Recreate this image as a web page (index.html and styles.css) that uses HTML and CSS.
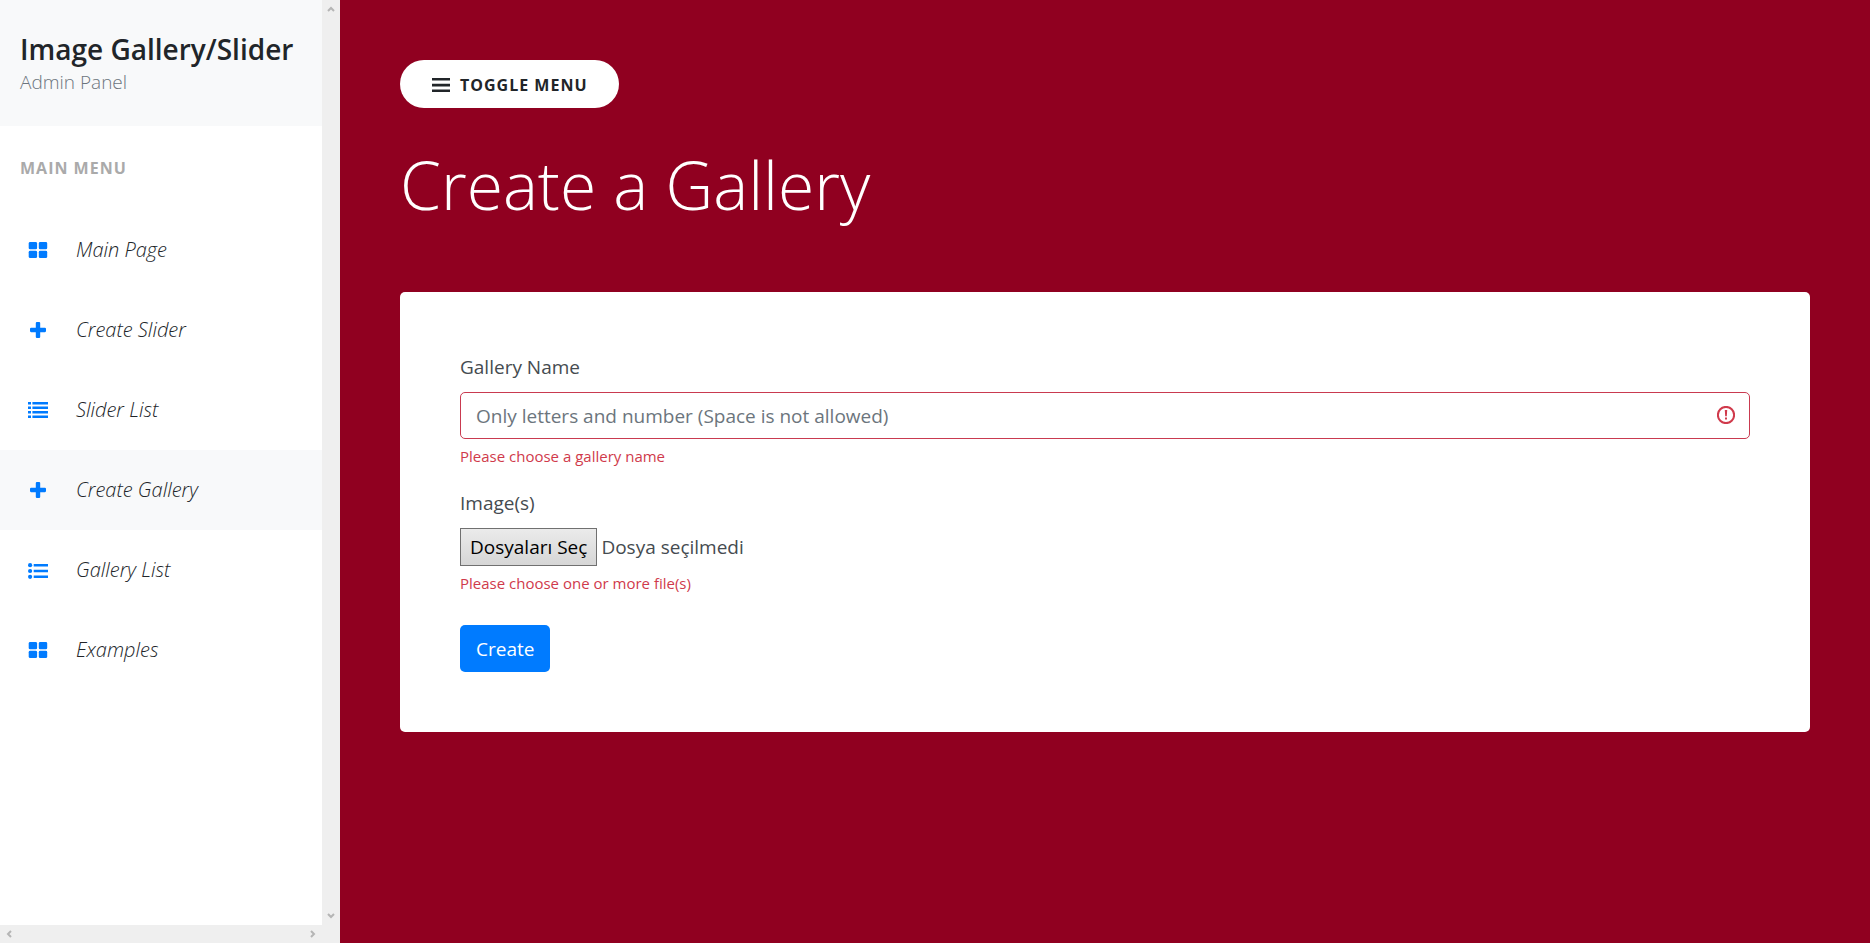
FILE: index.html
```html
<!DOCTYPE html>
<html lang="en">
<head>
    <meta charset="UTF-8">
    <meta name="viewport" content="width=device-width, initial-scale=1.0">
    <title>Create a Gallery</title>
    <link rel="stylesheet" href="styles.css">
</head>
<body>
    <svg class="sprite" aria-hidden="true">
        <symbol id="th-large" viewBox="0 0 20 20">
            <rect x="0.7" y="2" width="8.4" height="7.3" rx="1.4"/>
            <rect x="10.8" y="2" width="8.4" height="7.3" rx="1.4"/>
            <rect x="0.7" y="10.8" width="8.4" height="7.3" rx="1.4"/>
            <rect x="10.8" y="10.8" width="8.4" height="7.3" rx="1.4"/>
        </symbol>
        <symbol id="plus" viewBox="0 0 20 20">
            <rect x="2" y="7.8" width="16" height="4.4" rx="1.1"/>
            <rect x="7.8" y="2" width="4.4" height="16" rx="1.1"/>
        </symbol>
        <symbol id="list" viewBox="0 0 20 20">
            <path d="M0 2h3v2.6H0zM4.4 2H20v2.6H4.4zM0 6.5h3v2.6H0zM4.4 6.5H20v2.6H4.4zM0 11h3v2.6H0zM4.4 11H20v2.6H4.4zM0 15.4h3V18H0zM4.4 15.4H20V18H4.4z"/>
        </symbol>
        <symbol id="list-ul" viewBox="0 0 20 20">
            <circle cx="2.1" cy="5.2" r="2.1"/>
            <circle cx="2.1" cy="11" r="2.1"/>
            <circle cx="2.1" cy="16.8" r="2.1"/>
            <path d="M5.7 4H20v2.6H5.7zM5.7 9.7H20v2.6H5.7zM5.7 15.5H20v2.6H5.7z"/>
        </symbol>
    </svg>

    <div class="wrapper">
        <div class="sidebar" id="sidebar">
            <nav class="sidebar-content">
                <div class="sidebar-header">
                    <h4>Image Gallery/Slider</h4>
                    <p>Admin Panel</p>
                </div>
                <p class="menu-title">Main Menu</p>
                <ul class="menu">
                    <li><a href="#"><svg class="icon"><use href="#th-large"/></svg>Main Page</a></li>
                    <li><a href="#"><svg class="icon"><use href="#plus"/></svg>Create Slider</a></li>
                    <li><a href="#"><svg class="icon"><use href="#list"/></svg>Slider List</a></li>
                    <li><a href="#" class="active"><svg class="icon"><use href="#plus"/></svg>Create Gallery</a></li>
                    <li><a href="#"><svg class="icon"><use href="#list-ul"/></svg>Gallery List</a></li>
                    <li><a href="#"><svg class="icon"><use href="#th-large"/></svg>Examples</a></li>
                </ul>
            </nav>
            <div class="scroll-y">
                <svg width="8" height="6" viewBox="0 0 8 6"><path d="M1 5l3-3 3 3"/></svg>
                <svg width="8" height="6" viewBox="0 0 8 6"><path d="M1 1l3 3 3-3"/></svg>
            </div>
            <div class="scroll-x">
                <svg width="6" height="8" viewBox="0 0 6 8"><path d="M5 1L2 4l3 3"/></svg>
                <svg width="6" height="8" viewBox="0 0 6 8"><path d="M1 1l3 3-3 3"/></svg>
            </div>
        </div>

        <main class="page-content">
            <button type="button" class="toggle" id="toggle">
                <svg width="18" height="16" viewBox="0 0 18 16"><path d="M0 1h18v2.6H0zM0 6.8h18v2.6H0zM0 12.5h18v2.6H0z"/></svg>
                <span>Toggle Menu</span>
            </button>

            <h1>Create a Gallery</h1>

            <form class="card">
                <div class="form-group">
                    <label for="name">Gallery Name</label>
                    <div class="input-box">
                        <input type="text" id="name" placeholder="Only letters and number (Space is not allowed)">
                        <svg class="invalid-icon" viewBox="0 0 18 18">
                            <circle cx="9" cy="9" r="8.1"/>
                            <path d="M7.8 4h2.4l-.4 6.3H8.2zM8 11.6h2v2H8z"/>
                        </svg>
                    </div>
                    <div class="invalid">Please choose a gallery name</div>
                </div>
                <div class="form-group">
                    <label for="images">Image(s)</label>
                    <div class="file-box">
                        <span class="file-button">Dosyaları Seç</span>
                        <span>Dosya seçilmedi</span>
                        <input type="file" id="images" multiple>
                    </div>
                    <div class="invalid">Please choose one or more file(s)</div>
                </div>
                <button type="submit" class="btn">Create</button>
            </form>
        </main>
    </div>

    <script>
        document.getElementById('toggle').addEventListener('click', () => {
            document.getElementById('sidebar').classList.toggle('closed');
        });
    </script>
</body>
</html>
```
FILE: styles.css
```css
* {
    box-sizing: border-box;
}

body {
    margin: 0;
    font-family: "Open Sans", "Noto Sans", sans-serif;
    font-size: 19px;
    line-height: 30px;
    color: #454b50;
    background-color: #900020;
}

h1, h4, p, ul {
    margin: 0;
    padding: 0;
}

.sprite {
    display: none;
}

.wrapper {
    display: flex;
    min-height: 100vh;
}

/* Sidebar */
.sidebar {
    display: grid;
    grid-template-columns: 1fr 18px;
    grid-template-rows: 1fr 18px;
    flex: 0 0 340px;
    height: 100vh;
    position: sticky;
    top: 0;
    background-color: #efefef;
}

.sidebar.closed {
    display: none;
}

.sidebar-content {
    background-color: #fff;
    overflow: hidden;
}

.sidebar-header {
    padding: 31px 20px 29px;
    background-color: #f8f9fa;
}

.sidebar-header h4 {
    font-size: 28px;
    font-weight: 600;
    line-height: 36px;
    color: #212529;
    white-space: nowrap;
}

.sidebar-header p {
    font-weight: 300;
    color: #6c757d;
}

.menu-title {
    padding: 27px 20px;
    font-size: 16px;
    font-weight: 700;
    letter-spacing: 1px;
    text-transform: uppercase;
    color: #aaa;
}

.menu {
    list-style: none;
}

.menu a {
    display: flex;
    align-items: center;
    gap: 28px;
    height: 80px;
    padding: 0 28px;
    font-size: 20px;
    font-style: italic;
    font-weight: 300;
    color: #212529;
    text-decoration: none;
}

.menu a.active {
    background-color: #f8f9fa;
}

.icon {
    width: 20px;
    height: 20px;
    fill: #007bff;
}

.scroll-x, .scroll-y {
    display: flex;
    justify-content: space-between;
    align-items: center;
    padding: 6px;
}

.scroll-y {
    flex-direction: column;
}

.scroll-x svg, .scroll-y svg {
    fill: none;
    stroke: #b5b5b5;
    stroke-width: 2;
}

/* Content */
.page-content {
    flex: 1;
    padding: 60px;
}

.toggle {
    display: flex;
    align-items: center;
    gap: 10px;
    height: 48px;
    padding: 2px 32px 0;
    border: none;
    border-radius: 24px;
    background-color: #fff;
    font-family: inherit;
    font-size: 16px;
    font-weight: 700;
    letter-spacing: 1px;
    text-transform: uppercase;
    color: #212529;
    cursor: pointer;
}

.toggle svg {
    fill: #212529;
}

h1 {
    margin: 30px 0 62px;
    font-size: 66px;
    font-weight: 300;
    line-height: 92px;
    color: #fff;
}

.card {
    padding: 60px;
    border-radius: 5px;
    background-color: #fff;
}

.form-group {
    margin-bottom: 20px;
}

.form-group label {
    display: block;
    margin-bottom: 10px;
}

.input-box {
    position: relative;
}

.input-box input {
    display: block;
    width: 100%;
    height: 47px;
    padding: 1px 47px 0 15px;
    border: 1px solid #c93a50;
    border-radius: 5px;
    font-family: inherit;
    font-size: inherit;
    color: #495057;
}

.input-box input::placeholder {
    color: #6c757d;
}

.invalid-icon {
    position: absolute;
    top: 14px;
    right: 15px;
    width: 18px;
    height: 18px;
    fill: #d03a4b;
}

.invalid-icon circle {
    fill: none;
    stroke: #d03a4b;
    stroke-width: 2;
}

.invalid {
    margin-top: 5px;
    font-size: 15px;
    line-height: 24px;
    color: #d03a4b;
}

.file-box {
    display: inline-flex;
    align-items: center;
    gap: 4px;
    position: relative;
    vertical-align: top;
}

/* native control is kept on top for clicks and keyboard */
.file-box input {
    position: absolute;
    inset: 0;
    width: 100%;
    opacity: 0;
}

.file-button {
    padding: 3px 9px;
    border: 1px solid #707070;
    background: linear-gradient(#ebebeb, #d6d6d6);
    color: #000;
}

.btn {
    display: block;
    height: 47px;
    margin-top: 30px;
    padding: 1px 16px 0;
    border: none;
    border-radius: 5px;
    background-color: #007bff;
    font-family: inherit;
    font-size: inherit;
    color: #fff;
    cursor: pointer;
}
```
